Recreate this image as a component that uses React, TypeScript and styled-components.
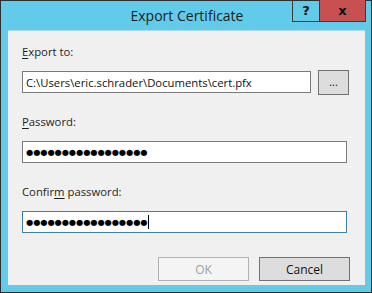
import React from 'react';
import styled, { createGlobalStyle } from 'styled-components';

const Global = createGlobalStyle`
  html, body {
    margin: 0;
    padding: 0;
    background: #ffffff;
  }
  body {
    font-family: "Open Sans", "Noto Sans", sans-serif;
  }
`

const Window = styled.div`
  width: 372px;
  height: 293px;
  box-sizing: border-box;
  border: 1px solid #2e2e2e;
  background: #63cbea;
  display: flex;
  flex-direction: column;
`

const TitleBar = styled.div`
  height: 29px;
  display: grid;
  grid-template-columns: 1fr auto 1fr;
  align-items: start;
`

const Title = styled.div`
  grid-column: 2;
  font-size: 14px;
  line-height: 29px;
  color: #1c1c1c;
  padding-left: 2px;
`

const Caption = styled.div`
  grid-column: 3;
  justify-self: end;
  display: flex;
  margin-right: 5px;
  margin-top: -1px;
  border: 1px solid #3a3a3a;
  border-top: none;
  height: 21px;
`

const CaptionButton = styled.div<{ $close?: boolean }>`
  width: ${p => (p.$close ? '45px' : '26px')};
  height: 21px;
  background: ${p => (p.$close ? '#c75050' : 'transparent')};
  border-left: ${p => (p.$close ? '1px solid #3a3a3a' : 'none')};
  display: flex;
  align-items: center;
  justify-content: center;
  font-family: "DejaVu Sans", sans-serif;
  font-weight: bold;
  font-size: 13px;
  color: #111;
`

const Client = styled.div`
  flex: 1;
  margin: 0 6px 6px 7px;
  background: #f0f0f0;
  border-top: 1px solid #a9d9ea;
  border-bottom: 1px solid #a0b4bc;
  padding: 13px 15px 0 14px;
  display: flex;
  flex-direction: column;
`

const Label = styled.div<{ $top: number }>`
  margin-top: ${p => p.$top}px;
  font-size: 11.3px;
  line-height: 16px;
  color: #1e1e1e;
  height: 16px;
  u {
    text-decoration: underline;
    text-underline-offset: 2px;
  }
`

const Row = styled.div<{ $top: number }>`
  margin-top: ${p => p.$top}px;
  display: flex;
  align-items: flex-start;
  gap: 7px;
  padding-right: 3px;
`

const Field = styled.div<{ $focus?: boolean; $width?: number }>`
  box-sizing: border-box;
  width: ${p => (p.$width ? `${p.$width}px` : '100%')};
  height: 22px;
  background: #ffffff;
  border: 1px solid ${p => (p.$focus ? '#3c7fb1' : '#7a7a7a')};
  padding: 0 3px;
  display: flex;
  align-items: center;
  font-size: 11.3px;
  color: #111;
  white-space: nowrap;
  overflow: hidden;
`

const Mask = styled.span`
  font-family: "DejaVu Sans", sans-serif;
  font-size: 8.2px;
  color: #000;
  line-height: 1;
`

const Caret = styled.span`
  display: inline-block;
  width: 1px;
  height: 14px;
  background: #000;
  margin-left: 1px;
`

const Browse = styled.div`
  box-sizing: border-box;
  width: 31px;
  height: 25px;
  margin-top: -1px;
  margin-right: -3px;
  background: #dddddd;
  border: 1px solid #707070;
  display: flex;
  align-items: center;
  justify-content: center;
  font-size: 11px;
  color: #111;
  padding-bottom: 2px;
`

const Buttons = styled.div`
  margin-top: 24px;
  display: flex;
  justify-content: flex-end;
  gap: 10px;
`

const Button = styled.div<{ $disabled?: boolean }>`
  box-sizing: border-box;
  width: 91px;
  height: 24px;
  background: ${p => (p.$disabled ? '#f4f4f4' : '#dddddd')};
  border: 1px solid ${p => (p.$disabled ? '#adb2b5' : '#707070')};
  color: ${p => (p.$disabled ? '#a0a0a0' : '#111')};
  display: flex;
  align-items: center;
  justify-content: center;
  font-size: 12px;
`

const dots = '●'.repeat(17);

export default function App() {
  return (
    <>
      <Global />
      <Window>
        <TitleBar>
          <Title>Export Certificate</Title>
          <Caption>
            <CaptionButton>?</CaptionButton>
            <CaptionButton $close>x</CaptionButton>
          </Caption>
        </TitleBar>
        <Client>
          <Label $top={0}><u>E</u>xport to:</Label>
          <Row $top={11}>
            <Field $width={289}>C:\Users\eric.schrader\Documents\cert.pfx</Field>
            <Browse>...</Browse>
          </Row>
          <Label $top={19}><u>P</u>assword:</Label>
          <Row $top={11}>
            <Field><Mask>{dots}</Mask></Field>
          </Row>
          <Label $top={21}>Confir<u>m</u> password:</Label>
          <Row $top={11}>
            <Field $focus><Mask>{dots}</Mask><Caret /></Field>
          </Row>
          <Buttons>
            <Button $disabled>OK</Button>
            <Button>Cancel</Button>
          </Buttons>
        </Client>
      </Window>
    </>
  );
}
